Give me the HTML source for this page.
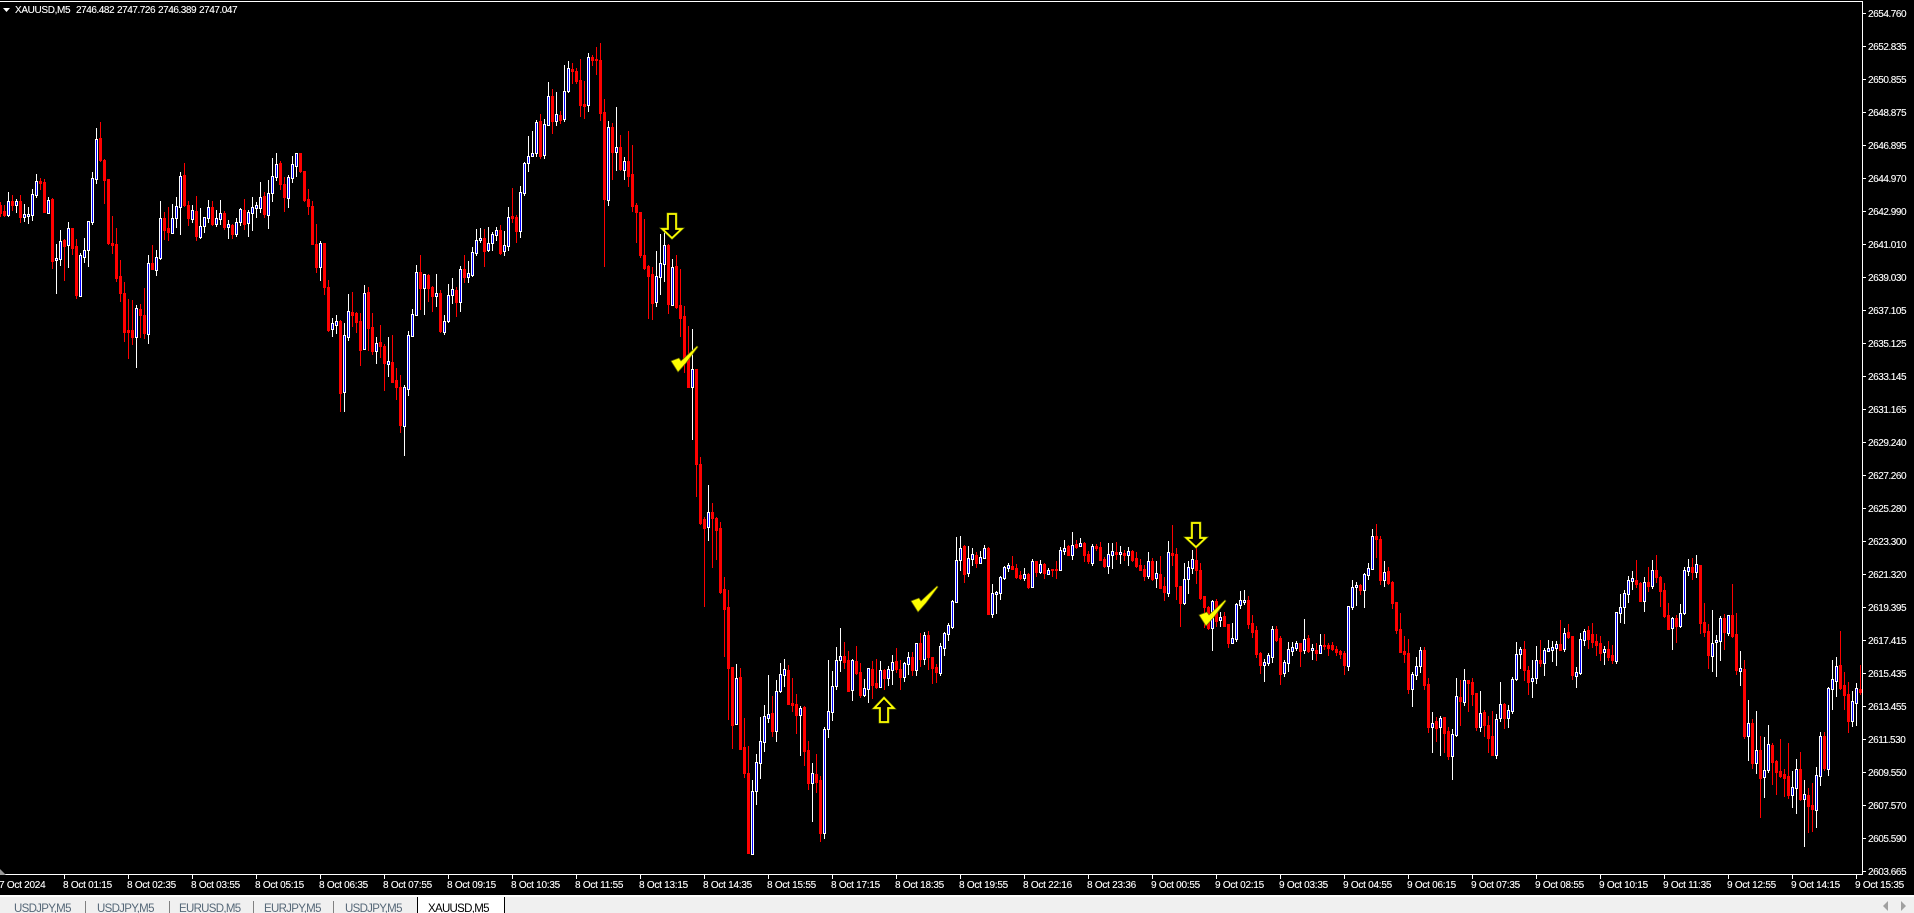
<!DOCTYPE html>
<html><head><meta charset="utf-8"><title>XAUUSD,M5</title>
<style>
html,body{margin:0;padding:0;background:#000;width:1914px;height:913px;overflow:hidden}
svg{display:block;position:absolute;left:0;top:0}
text{font-family:"Liberation Sans",sans-serif;font-size:10px;fill:#fff;stroke:#fff;stroke-width:.12}
.p text{letter-spacing:-.45px}
.t text{letter-spacing:-.25px}
.tab text{font-size:11.5px;letter-spacing:-.7px;fill:#566878;stroke:none}
</style></head><body>
<svg width="1914" height="913" viewBox="0 0 1914 913" xmlns="http://www.w3.org/2000/svg">
<rect width="1914" height="913" fill="#000"/>
<g shape-rendering="crispEdges" fill="none">
<path id="rw" stroke="#f00" stroke-width="1"/>
<path id="ww" stroke="#fff" stroke-width="1"/>
<path id="rb" stroke="#f00" stroke-width="3"/>
<path id="wb" stroke="#fff" stroke-width="3"/>
<path id="bb" stroke="#00f" stroke-width="1"/>
</g>
<g shape-rendering="crispEdges">
<rect x="0" y="1" width="1863" height="1" fill="#fff"/>
<rect x="1862" y="1" width="1" height="874" fill="#fff"/>
<rect x="0" y="874" width="1863" height="1" fill="#fff"/>
<path stroke="#fff" fill="none" d="M1863 13.5h3M1863 46.5h3M1863 79.5h3M1863 112.5h3M1863 145.5h3M1863 178.5h3M1863 211.5h3M1863 244.5h3M1863 277.5h3M1863 310.5h3M1863 343.5h3M1863 376.5h3M1863 409.5h3M1863 442.5h3M1863 475.5h3M1863 508.5h3M1863 541.5h3M1863 574.5h3M1863 607.5h3M1863 640.5h3M1863 673.5h3M1863 706.5h3M1863 739.5h3M1863 772.5h3M1863 805.5h3M1863 838.5h3M1863 871.5h3"/>
<path stroke="#fff" fill="none" d="M64.5 875v4M128.5 875v4M192.5 875v4M256.5 875v4M320.5 875v4M384.5 875v4M448.5 875v4M512.5 875v4M576.5 875v4M640.5 875v4M704.5 875v4M768.5 875v4M832.5 875v4M896.5 875v4M960.5 875v4M1024.5 875v4M1088.5 875v4M1152.5 875v4M1216.5 875v4M1280.5 875v4M1344.5 875v4M1408.5 875v4M1472.5 875v4M1536.5 875v4M1600.5 875v4M1664.5 875v4M1728.5 875v4M1792.5 875v4M1856.5 875v4"/>
</g>
<polygon points="0,869 6,875 0,875" fill="#9a9a9a"/>
<polygon points="3,8 10,8 6.5,12" fill="#fff"/>
<text x="15" y="13" style="letter-spacing:-.35px">XAUUSD,M5</text>
<g class="p">
<text x="76" y="13">2746.482</text><text x="117" y="13">2747.726</text><text x="158" y="13">2746.389</text><text x="199" y="13">2747.047</text>
<text x="1868" y="17">2654.760</text><text x="1868" y="50">2652.835</text><text x="1868" y="83">2650.855</text><text x="1868" y="116">2648.875</text><text x="1868" y="149">2646.895</text><text x="1868" y="182">2644.970</text><text x="1868" y="215">2642.990</text><text x="1868" y="248">2641.010</text><text x="1868" y="281">2639.030</text><text x="1868" y="314">2637.105</text><text x="1868" y="347">2635.125</text><text x="1868" y="380">2633.145</text><text x="1868" y="413">2631.165</text><text x="1868" y="446">2629.240</text><text x="1868" y="479">2627.260</text><text x="1868" y="512">2625.280</text><text x="1868" y="545">2623.300</text><text x="1868" y="578">2621.320</text><text x="1868" y="611">2619.395</text><text x="1868" y="644">2617.415</text><text x="1868" y="677">2615.435</text><text x="1868" y="710">2613.455</text><text x="1868" y="743">2611.530</text><text x="1868" y="776">2609.550</text><text x="1868" y="809">2607.570</text><text x="1868" y="842">2605.590</text><text x="1868" y="875">2603.665</text>
</g>
<g class="t">
<text x="-1" y="888">7 Oct 2024</text><text x="63" y="888">8 Oct 01:15</text><text x="127" y="888">8 Oct 02:35</text><text x="191" y="888">8 Oct 03:55</text><text x="255" y="888">8 Oct 05:15</text><text x="319" y="888">8 Oct 06:35</text><text x="383" y="888">8 Oct 07:55</text><text x="447" y="888">8 Oct 09:15</text><text x="511" y="888">8 Oct 10:35</text><text x="575" y="888">8 Oct 11:55</text><text x="639" y="888">8 Oct 13:15</text><text x="703" y="888">8 Oct 14:35</text><text x="767" y="888">8 Oct 15:55</text><text x="831" y="888">8 Oct 17:15</text><text x="895" y="888">8 Oct 18:35</text><text x="959" y="888">8 Oct 19:55</text><text x="1023" y="888">8 Oct 22:16</text><text x="1087" y="888">8 Oct 23:36</text><text x="1151" y="888">9 Oct 00:55</text><text x="1215" y="888">9 Oct 02:15</text><text x="1279" y="888">9 Oct 03:35</text><text x="1343" y="888">9 Oct 04:55</text><text x="1407" y="888">9 Oct 06:15</text><text x="1471" y="888">9 Oct 07:35</text><text x="1535" y="888">9 Oct 08:55</text><text x="1599" y="888">9 Oct 10:15</text><text x="1663" y="888">9 Oct 11:35</text><text x="1727" y="888">9 Oct 12:55</text><text x="1791" y="888">9 Oct 14:15</text><text x="1855" y="888">9 Oct 15:35</text>
</g>
<g shape-rendering="crispEdges">
<rect x="0" y="895" width="1914" height="2" fill="#fff"/>
<rect x="0" y="897" width="1914" height="16" fill="#f0f0f0"/>
<rect x="418" y="897" width="86" height="16" fill="#fff"/>
<rect x="417" y="897" width="1" height="16" fill="#000"/>
<rect x="504" y="897" width="1" height="16" fill="#000"/>
<path stroke="#808080" fill="none" d="M85.5 901v12M169.5 901v12M253.5 901v12M333.5 901v12"/>
</g>
<g class="tab">
<text x="14" y="912">USDJPY,M5</text><text x="97" y="912">USDJPY,M5</text><text x="179" y="912">EURUSD,M5</text><text x="264" y="912">EURJPY,M5</text><text x="345" y="912">USDJPY,M5</text>
<text x="428" y="912" style="fill:#000">XAUUSD,M5</text>
</g>
<polygon points="1888,901 1888,911 1883,906" fill="#a0a0a0"/>
<polygon points="1901,901 1901,911 1906,906" fill="#a0a0a0"/>
<g fill="#000" stroke-linejoin="miter">
<g stroke="#6a7a00" stroke-width="2.8">
<polygon points="668,214 676,214 676,229 681.5,229 672,238 662.5,229 668,229"/>
<polygon points="1192,523 1200,523 1200,538 1205.5,538 1196,547 1186.5,538 1192,538"/>
<polygon points="880,722 888,722 888,708 893.5,708 884,698 874.5,708 880,708"/>
</g>
<g stroke="#ff0" stroke-width="1.7">
<polygon points="668,214 676,214 676,229 681.5,229 672,238 662.5,229 668,229"/>
<polygon points="1192,523 1200,523 1200,538 1205.5,538 1196,547 1186.5,538 1192,538"/>
<polygon points="880,722 888,722 888,708 893.5,708 884,698 874.5,708 880,708"/>
</g>
</g>
<g fill="#ff0" stroke="#6a6a00" stroke-width=".7">
<polygon points="671,361 679,358 681,361 697,346 698,347 686,363 678,372"/>
<polygon points="911,601 919,598 921,601 937,586 938,587 926,603 918,612"/>
<polygon points="1199,615 1207,612 1209,615 1225,600 1226,601 1214,617 1206,626"/>
</g>
</svg>
<script>
var D="0 202 216 205 213,4 205 216 211 215,8 192 216 215 201,12 195 210 201 205,16 199 212 205 201,20 195 222 201 217,24 204 221 217 214,28 207 223 216 214,32 189 220 215 194,36 174 197 195 181,40 178 189 181 183,44 179 212 182 212,48 197 213 213 200,52 198 268 199 261,56 244 293 260 258,60 230 265 259 241,64 239 280 240 246,68 222 267 245 228,72 228 254 228 248,76 239 298 246 295,80 253 296 296 255,84 238 262 257 250,88 221 266 250 221,92 172 224 222 178,96 128 183 179 139,100 122 161 138 160,104 159 203 160 180,108 179 244 179 243,112 216 253 243 245,116 228 281 244 278,120 260 301 276 293,124 282 341 293 332,128 299 358 330 332,132 300 344 330 337,136 305 367 337 308,140 304 337 309 315,144 288 338 315 333,148 255 343 334 263,152 245 269 263 269,156 250 275 270 257,160 201 259 258 218,164 212 239 218 230,168 207 240 228 232,172 204 233 233 218,176 197 227 218 206,180 172 234 207 176,184 163 206 175 205,188 201 225 205 218,192 205 222 219 210,196 196 240 211 236,200 208 238 237 226,204 217 232 226 217,208 200 222 218 207,212 201 225 207 224,216 210 226 224 218,220 200 224 219 213,224 211 229 213 227,228 220 238 227 224,232 224 238 225 234,236 218 236 234 222,240 208 225 222 209,244 199 229 210 224,248 210 236 223 212,252 197 230 213 207,256 202 217 207 206,260 182 212 208 197,264 192 217 196 214,268 180 228 215 193,272 158 201 193 176,276 153 180 177 164,280 161 189 163 184,284 177 211 184 197,288 175 207 198 177,292 156 182 178 164,296 153 176 166 153,300 153 172 153 171,304 171 201 171 200,308 189 214 199 206,312 201 244 206 244,316 224 272 244 267,320 241 280 267 243,324 243 294 243 287,328 280 331 287 330,332 318 336 329 323,336 315 333 325 321,340 320 411 321 393,344 323 411 392 335,348 294 340 337 311,352 292 326 312 315,356 312 332 313 322,360 313 365 321 350,364 285 349 349 293,368 287 350 292 328,372 313 354 327 351,376 337 363 351 343,380 325 357 342 346,384 344 390 346 363,388 337 376 363 362,392 335 382 362 382,396 368 399 380 387,400 375 432 387 425,404 385 455 426 387,408 331 395 389 335,412 309 336 336 314,416 265 315 315 272,420 255 309 272 288,424 274 314 288 274,428 274 301 275 288,432 286 311 287 296,436 274 306 296 293,440 290 332 293 331,444 315 334 332 321,448 284 322 321 295,452 278 303 295 289,456 287 316 290 302,460 266 311 302 269,464 255 282 269 277,468 261 282 277 273,472 247 276 275 252,476 229 255 253 240,480 228 242 240 238,484 229 266 238 251,488 227 251 250 243,492 232 250 243 234,496 227 240 235 230,500 225 254 230 253,504 231 255 251 245,508 207 250 246 217,512 188 222 216 218,516 215 242 217 231,520 186 237 231 192,524 162 195 193 163,528 136 171 163 156,532 131 156 156 153,536 120 156 153 122,540 114 158 121 156,544 119 158 155 124,548 82 125 125 96,552 89 133 96 121,556 92 125 121 114,560 111 123 115 120,564 65 121 119 91,568 61 92 91 68,572 63 83 69 71,576 68 83 71 81,580 59 116 80 105,584 81 118 104 106,588 53 111 105 57,592 55 65 57 60,596 47 74 59 60,600 43 120 60 113,604 99 266 112 199,608 121 205 200 127,612 123 179 127 152,616 107 170 152 147,620 135 170 147 169,624 157 179 170 161,628 131 186 161 176,632 145 211 174 206,636 203 242 205 212,640 212 257 212 255,644 219 269 255 268,648 265 318 266 276,652 267 319 274 303,656 251 306 302 276,660 234 294 277 263,664 232 281 264 245,668 244 313 245 304,672 259 305 305 267,676 255 308 266 307,680 269 336 305 318,684 306 372 316 360,688 326 387 357 387,692 329 439 387 369,696 369 496 369 464,700 457 524 464 523,704 517 606 519 528,708 485 540 527 512,712 503 567 512 518,716 517 559 518 530,720 522 593 528 592,724 577 656 589 609,728 590 719 607 668,732 667 748 667 725,736 664 724 724 678,740 668 749 677 749,744 718 777 747 773,748 746 853 773 853,752 780 854 854 791,756 754 804 791 762,760 717 778 763 741,764 705 751 742 716,768 675 722 718 714,772 696 736 713 731,776 680 741 731 691,780 663 692 691 674,784 659 686 675 669,788 665 704 670 704,792 678 711 703 705,796 694 733 704 715,800 706 755 715 708,804 706 765 707 751,808 741 789 750 783,812 763 821 783 773,816 754 792 774 782,820 776 841 780 833,824 727 838 833 729,828 660 737 729 711,832 671 720 712 686,836 647 689 686 660,840 628 671 660 656,844 642 668 656 662,848 651 691 660 691,852 659 700 690 660,856 646 674 661 673,860 663 697 672 695,864 679 696 695 688,868 668 702 689 668,872 661 698 669 685,876 659 688 683 687,880 661 687 687 670,884 669 689 670 678,888 666 685 678 669,892 655 684 670 662,896 648 672 661 669,900 660 689 669 677,904 662 681 677 663,908 652 674 664 657,912 652 675 657 670,916 643 675 670 643,920 633 666 643 659,924 632 664 659 635,928 631 669 635 657,932 657 683 657 668,936 664 682 667 672,940 643 675 673 646,944 632 655 648 633,948 623 640 634 625,952 600 628 627 601,956 537 602 602 560,960 536 570 560 548,964 545 582 546 574,968 546 576 573 558,972 548 565 559 554,976 552 567 555 563,980 551 563 563 557,984 545 558 558 548,988 547 614 548 614,992 584 617 614 593,996 591 613 594 592,1000 576 599 593 577,1004 566 579 578 567,1008 563 571 568 565,1012 556 569 566 569,1016 564 578 568 577,1020 571 579 575 578,1024 568 580 578 574,1028 573 588 574 587,1032 559 587 587 561,1036 561 576 561 572,1040 560 573 572 564,1044 563 578 564 573,1048 568 574 574 570,1052 569 576 569 570,1056 561 578 569 570,1060 547 570 570 550,1064 540 554 551 548,1068 545 555 546 555,1072 532 559 555 545,1076 540 548 544 547,1080 538 546 546 543,1084 542 561 543 555,1088 551 563 554 561,1092 544 565 563 546,1096 544 550 546 548,1100 542 560 547 560,1104 557 567 559 566,1108 543 573 566 554,1112 543 568 555 551,1116 542 559 552 554,1120 546 563 554 552,1124 550 560 553 555,1128 547 565 555 551,1132 550 561 551 560,1136 552 567 558 566,1140 559 570 565 570,1144 565 580 569 576,1148 552 578 576 561,1152 558 580 561 579,1156 561 587 578 573,1160 556 588 574 588,1164 577 600 586 592,1168 541 596 593 552,1172 525 565 553 555,1176 548 599 554 586,1180 586 626 586 603,1184 563 604 603 579,1188 561 593 579 567,1192 550 573 568 559,1196 548 583 560 570,1200 563 599 570 598,1204 596 627 596 607,1208 606 629 607 628,1212 600 650 628 601,1216 599 626 601 621,1220 612 626 620 617,1224 612 626 616 626,1228 624 647 624 643,1232 623 643 643 638,1236 603 641 639 604,1240 591 608 605 600,1244 590 604 602 600,1248 596 628 600 624,1252 615 637 623 632,1256 626 657 630 654,1260 652 673 653 665,1264 659 681 665 662,1268 653 665 663 655,1272 626 662 657 629,1276 626 641 629 640,1280 636 684 638 674,1284 660 676 673 662,1288 642 671 663 649,1292 642 655 651 647,1296 641 650 648 643,1300 643 666 643 651,1304 619 653 650 639,1308 635 652 638 651,1312 644 659 649 649,1316 643 660 650 653,1320 634 653 653 645,1324 634 649 645 646,1328 643 655 645 648,1332 642 650 645 649,1336 646 655 649 652,1340 650 658 651 654,1344 651 674 653 665,1348 606 670 666 606,1352 580 609 607 587,1356 582 605 587 585,1360 584 594 585 590,1364 573 607 590 574,1368 563 579 575 568,1372 529 569 569 536,1376 524 557 536 539,1380 536 584 539 580,1384 561 586 580 572,1388 567 584 571 583,1392 581 608 582 603,1396 602 633 602 630,1400 613 652 629 652,1404 636 662 651 654,1408 639 693 653 689,1412 672 706 689 674,1416 657 679 675 666,1420 647 672 666 650,1424 647 689 650 685,1428 678 732 684 727,1432 712 752 727 723,1436 717 741 721 728,1440 716 755 727 718,1444 717 752 717 733,1448 727 759 731 756,1452 729 779 756 734,1456 678 736 735 696,1460 680 725 697 701,1464 669 705 702 680,1468 680 711 680 683,1472 678 705 682 694,1476 693 730 693 727,1480 691 731 727 713,1484 710 736 712 725,1488 716 752 725 738,1492 711 755 736 755,1496 714 758 755 719,1500 682 721 718 704,1504 703 728 704 718,1508 705 727 718 710,1512 677 713 711 679,1516 642 680 679 654,1520 647 668 654 649,1524 641 680 649 670,1528 666 694 670 682,1532 660 697 681 678,1536 646 683 678 660,1540 640 666 660 663,1544 648 675 663 650,1548 640 651 650 649,1552 641 661 650 647,1556 641 665 648 644,1560 620 650 644 650,1564 628 651 649 633,1568 624 638 632 637,1572 636 679 636 675,1576 667 687 676 672,1580 633 674 673 639,1584 629 645 640 631,1588 626 648 630 639,1592 623 647 634 642,1596 634 655 641 645,1600 636 660 643 653,1604 646 664 652 649,1608 641 660 649 657,1612 645 663 655 660,1616 612 663 661 612,1620 594 622 613 607,1624 590 623 607 593,1628 576 602 594 580,1632 571 589 580 579,1636 560 587 580 584,1640 582 601 583 601,1644 577 611 601 582,1648 567 591 582 586,1652 560 588 586 570,1656 555 582 570 577,1660 576 606 577 591,1664 583 617 590 616,1668 603 629 615 629,1672 617 649 628 618,1676 615 642 618 626,1680 604 627 626 613,1684 567 614 613 570,1688 559 575 571 567,1692 558 579 567 572,1696 555 577 572 564,1700 565 633 565 623,1704 603 636 622 632,1708 624 668 631 655,1712 610 671 656 643,1716 635 676 641 641,1720 616 660 641 618,1724 614 649 618 632,1728 615 635 633 615,1732 584 637 615 636,1736 613 674 634 670,1740 651 685 670 669,1744 660 738 669 736,1748 700 760 736 723,1752 719 768 723 763,1756 711 773 763 750,1760 736 817 750 778,1764 737 797 777 770,1768 725 772 770 744,1772 743 784 745 762,1776 760 794 761 772,1780 739 777 771 776,1784 769 796 774 778,1788 743 798 776 795,1792 771 807 795 787,1796 759 813 788 769,1800 752 800 769 799,1804 780 846 799 794,1808 788 832 795 806,1812 783 831 805 809,1816 767 827 810 775,1820 732 785 776 736,1824 732 770 736 768,1828 687 775 769 688,1832 660 709 689 679,1836 657 696 681 666,1840 631 689 665 688,1844 672 709 685 695,1848 682 732 694 721,1852 691 726 721 701,1856 683 725 703 688,1860 665 694 689 692";
var rw="",ww="",rb="",wb="",bb="";
D.split(",").forEach(function(s){
  var v=s.split(" ").map(Number),x=v[0]+.5,h=v[1],l=v[2]+1,a=v[3],b=v[4];
  if(a<b){
    rw+="M"+x+" "+h+"V"+l;
    rb+="M"+x+" "+a+"V"+(b+1);
  }else{
    var t=b,m=a;
    if(m-t<2){t=t-1;m=m+1;}
    ww+="M"+x+" "+h+"V"+l;
    wb+="M"+x+" "+t+"V"+(m+1);
    if(m-t>=2)bb+="M"+x+" "+(t+1)+"V"+m;
  }
});
function S(i,d){document.getElementById(i).setAttribute("d",d);}
S("rw",rw);S("ww",ww);S("rb",rb);S("wb",wb);S("bb",bb);
</script>
</body></html>
